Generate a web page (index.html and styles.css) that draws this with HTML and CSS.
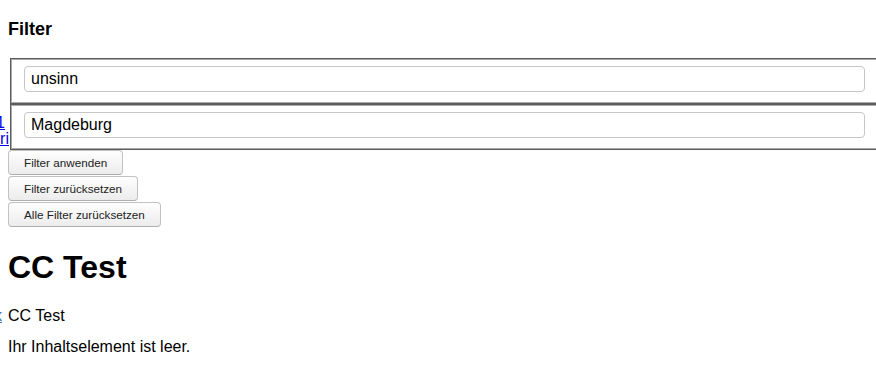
FILE: index.html
```html
<!DOCTYPE html>
<html lang="de">
<head>
<meta charset="utf-8">
<title>Filter</title>
<link rel="stylesheet" href="styles.css">
</head>
<body>
  <h3 class="filter-title">Filter</h3>
  <div class="filter-row">
    <div class="side-links">
      <a href="#" class="side-link side-link-1">Ergebnis 1</a>
      <a href="#" class="side-link side-link-2">Kategori</a>
    </div>
    <div class="fields">
      <div class="field"><input class="field-input" type="text" value="unsinn"></div>
      <div class="field"><input class="field-input" type="text" value="Magdeburg"></div>
    </div>
  </div>
  <div class="buttons">
    <button class="btn" type="button">Filter anwenden</button>
    <button class="btn" type="button">Filter zurücksetzen</button>
    <button class="btn" type="button">Alle Filter zurücksetzen</button>
  </div>
  <h1 class="page-title">CC Test</h1>
  <div class="intro">
    <div class="edge"><a href="#" class="edge-link">Link</a></div>
    <p class="text">CC Test</p>
  </div>
  <p class="text">Ihr Inhaltselement ist leer.</p>
</body>
</html>
```
FILE: styles.css
```css
html {
  overflow: hidden;
  background: #fff;
}
body {
  margin: 0;
  padding: 8px;
  font-family: "Liberation Sans", Arial, Helvetica, sans-serif;
  color: #000;
}
.filter-title {
  margin: 10px 0 18px;
  font-size: 18px;
  line-height: 22px;
  font-weight: bold;
}
.filter-row {
  display: flex;
  margin-left: -8px;
}
.side-links {
  flex: 0 0 10px;
  overflow: hidden;
  display: flex;
  flex-direction: column;
  justify-content: flex-end;
  padding-bottom: 3px;
}
.side-link {
  display: block;
  box-sizing: border-box;
  width: 100px;
  margin-left: -90px;
  text-align: right;
  white-space: nowrap;
  font-size: 16px;
  line-height: 16px;
  color: #0000ee;
}
.side-link-1 { padding-right: 5px; }
.side-link-2 { padding-right: 1px; }
.fields {
  flex: 0 0 calc(100% + 1px);
}
.field {
  border: 1px solid #5c5c5c;
  box-shadow: inset 0 0 0 1px #a9a9a9;
  padding: 7px 13px 11px;
}
.field-input {
  display: block;
  box-sizing: border-box;
  width: 100%;
  height: 26px;
  margin: 0;
  padding: 0 6px;
  border: 1px solid #c6c6c6;
  border-radius: 4px;
  background: #fff;
  font-family: "Liberation Sans", Arial, sans-serif;
  font-size: 16px;
  color: #000;
}
.buttons {
  display: flex;
  flex-direction: column;
  align-items: flex-start;
}
.btn {
  height: 25px;
  margin: 0 0 1px;
  padding: 0 15px;
  border: 1px solid #c2c2c2;
  border-bottom-color: #aeaeae;
  border-radius: 4px;
  background: linear-gradient(#fefefe, #ececec);
  font-family: "Liberation Sans", Arial, sans-serif;
  font-size: 11.7px;
  color: #222;
}
.page-title {
  margin: 21.4px 0;
  font-size: 32px;
  line-height: 37px;
  font-weight: bold;
}
.intro {
  display: flex;
  margin: 0 0 16px -8px;
  align-items: baseline;
}
.edge {
  flex: 0 0 8px;
  overflow: hidden;
  display: flex;
  justify-content: flex-end;
  font-size: 16px;
  line-height: 15px;
}
.edge-link {
  display: block;
  box-sizing: border-box;
  width: 60px;
  margin-left: -52px;
  padding-right: 6px;
  text-align: right;
  white-space: nowrap;
  color: #4a6fb5;
}
.text {
  margin: 16px 0;
  font-size: 16px;
  line-height: 15px;
}
.intro .text {
  margin: 0;
}
```
